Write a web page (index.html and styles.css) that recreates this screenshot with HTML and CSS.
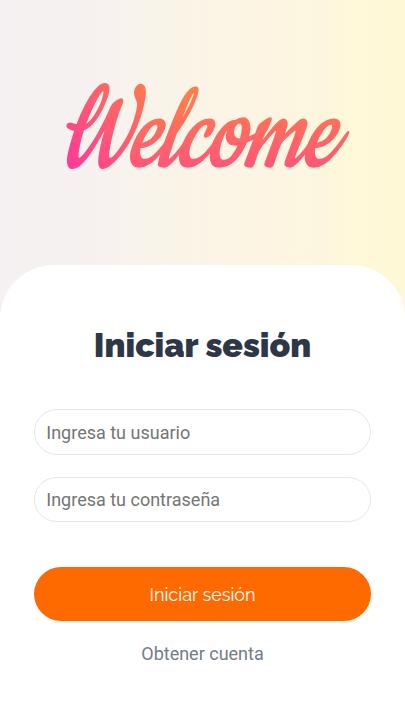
FILE: index.html
```html
<!DOCTYPE html>
<html lang="es">
<head>
<meta charset="utf-8">
<meta name="viewport" content="width=device-width, initial-scale=1">
<title>Iniciar sesión</title>
<link rel="stylesheet" href="styles.css">
</head>
<body>
<header class="hero">
  <svg class="logo" viewBox="0 0 405 265" role="img" aria-label="Welcome">
    <defs>
      <linearGradient id="initial" gradientUnits="userSpaceOnUse" x1="0" y1="-6" x2="65" y2="-76">
        <stop offset="0" stop-color="#ff379d"/>
        <stop offset="1" stop-color="#ff7652"/>
      </linearGradient>
      <linearGradient id="rest" gradientUnits="userSpaceOnUse" x1="0" y1="0" x2="0" y2="-68">
        <stop offset="0" stop-color="#ff5777"/>
        <stop offset="1" stop-color="#ff7c4c"/>
      </linearGradient>
    </defs>
    <text class="lettering" transform="translate(54 166) skewX(-18)" textLength="278" lengthAdjust="spacingAndGlyphs"><tspan class="initial">W</tspan><tspan class="rest">elcome</tspan></text>
  </svg>
</header>
<main class="card">
  <h1 class="title">Iniciar sesión</h1>
  <form class="form">
    <input class="field" type="text" placeholder="Ingresa tu usuario">
    <input class="field" type="password" placeholder="Ingresa tu contraseña">
    <button class="submit" type="button">Iniciar sesión</button>
  </form>
  <a class="signup">Obtener cuenta</a>
</main>
</body>
</html>
```
FILE: styles.css
```css
* { box-sizing: border-box; }
body {
  margin: 0;
  height: 720px;
  overflow: hidden;
  display: flex;
  flex-direction: column;
  font-family: Roboto, sans-serif;
  background: linear-gradient(90deg, #f5f1f2 0%, #f6f1f0 20%, #f9f4e9 39%, #fcf4e5 55%, #fdf6df 78%, #fff8d9 88%, #fff8d7 100%);
}
.hero { height: 265px; flex: none; }
.logo { display: block; width: 405px; height: 265px; overflow: visible; }
.lettering { font-family: Cookie, "Dancing Script", cursive; font-weight: 400; font-size: 131px; stroke-width: 2px; stroke-linejoin: round; }
.initial { fill: url(#initial); stroke: url(#initial); }
.rest { fill: url(#rest); stroke: url(#rest); }
.card {
  flex: 1;
  display: flex;
  flex-direction: column;
  align-items: center;
  padding: 56px 33.75px 0;
  border-radius: 54px 54px 0 0;
  background: #fff;
}
.title {
  margin: 0;
  height: 48px;
  line-height: 48px;
  white-space: nowrap;
  font-family: Raleway, Lato, sans-serif;
  font-size: 33.75px;
  font-weight: 900;
  color: #2d3748;
}
.form {
  width: 337.5px;
  margin-top: 40px;
  display: flex;
  flex-direction: column;
}
.field {
  height: 46px;
  margin: 0 0 22px;
  padding: 0 12px;
  border: 1px solid #e7e7e7;
  border-radius: 23px;
  background: #fff;
  font: 18px Roboto, sans-serif;
  text-indent: -0.5px;
}
.field + .field { height: 45px; margin-bottom: 45px; }
.field::placeholder { color: #757575; }
.submit {
  height: 54px;
  padding: 0;
  border: 0;
  border-radius: 27px;
  background: #ff6a00;
  color: #fff;
  font: 18px Raleway, Lato, sans-serif;
}
.signup {
  margin-top: 21px;
  line-height: 24px;
  font-size: 18px;
  color: #757b88;
}
```
